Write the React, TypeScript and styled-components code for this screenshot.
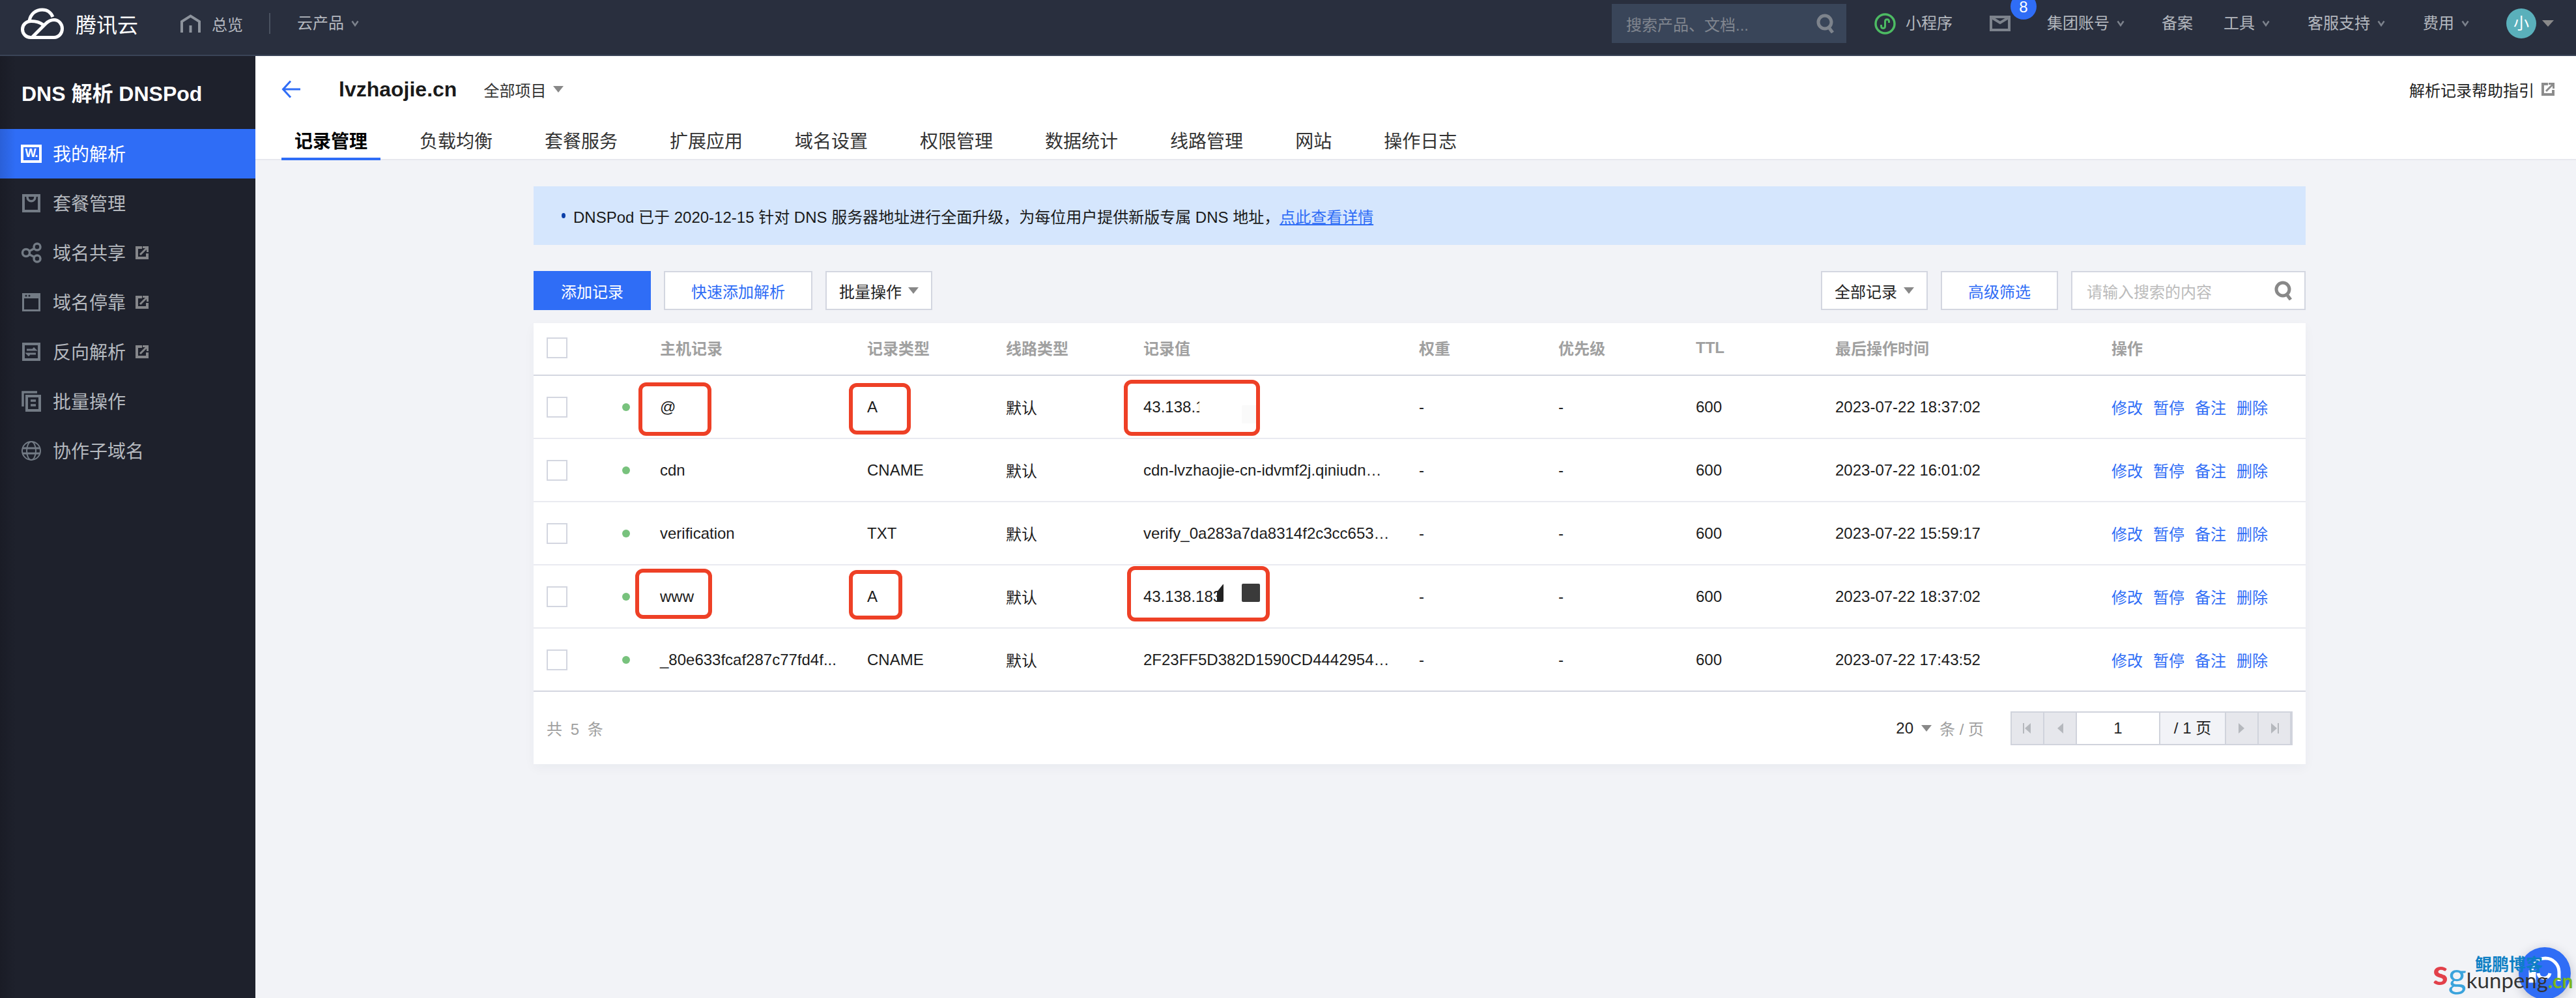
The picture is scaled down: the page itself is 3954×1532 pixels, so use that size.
import * as React from 'react'
import styled, { createGlobalStyle } from 'styled-components'

const FONT = `"Liberation Sans", "Noto Sans CJK SC", sans-serif`
const BLUE = '#2f6df6'
const LINE = '#d3d6e0'
const ROW_COLS = '194px 318px 213px 211px 423px 214px 211px 214px 424px 298px'

const GlobalStyle = createGlobalStyle`
  html, body {
    margin: 0;
    padding: 0;
    background: #f2f3f7;
    font-family: ${FONT};
  }
  * {
    box-sizing: border-box;
  }
`

const Page = styled.div`
  position: relative;
  width: 3954px;
  height: 1532px;
  overflow: hidden;
  display: flex;
  flex-direction: column;
`

/* top bar */
const TopBar = styled.header`
  flex: none;
  height: 86px;
  padding: 0 34px 12px 32px;
  display: flex;
  align-items: center;
  background: #292f3e;
  border-bottom: 2px solid #3a4457;
`

const Brand = styled.div`
  display: flex;
  align-items: center;
  gap: 18px;
  font-size: 32px;
  color: #fff;
`

const NavHome = styled.div`
  display: flex;
  align-items: center;
  gap: 17px;
  margin-left: 65px;
  font-size: 24px;
  color: #b4b8bf;
`

const NavDivider = styled.div`
  width: 2px;
  height: 32px;
  margin: 0 41px 0 40px;
  background: #4a5260;
`

const NavItem = styled.div<{ $gap?: number; $inner?: number }>`
  display: flex;
  align-items: center;
  gap: ${(p) => p.$inner ?? 11}px;
  margin-left: ${(p) => p.$gap ?? 57}px;
  font-size: 24px;
  line-height: 32px;
  color: #b4b8bf;
  white-space: nowrap;
`

const NavSpacer = styled.div`
  flex: 1;
`

const SearchBox = styled.div`
  width: 360px;
  height: 60px;
  padding: 0 18px 0 22px;
  display: flex;
  align-items: center;
  justify-content: space-between;
  background: #394559;
  font-size: 24px;
  color: #80858f;
`

const MailWrap = styled.div`
  position: relative;
  width: 32px;
  height: 24px;
  margin-left: 57px;
`

const Badge = styled.div`
  position: absolute;
  left: 32px;
  top: -34px;
  width: 40px;
  height: 40px;
  padding-top: 2px;
  display: flex;
  align-items: center;
  justify-content: center;
  border-radius: 50%;
  background: ${BLUE};
  color: #fff;
  font-size: 24px;
  line-height: 20px;
`

const Avatar = styled.div`
  width: 46px;
  height: 46px;
  margin-left: 57px;
  border-radius: 50%;
  background: #5ab0bb;
  color: #fff;
  font-size: 24px;
  line-height: 46px;
  text-align: center;
`

const AvatarCaret = styled.span`
  margin-left: 9px;
  width: 0;
  height: 0;
  border-left: 9px solid transparent;
  border-right: 9px solid transparent;
  border-top: 10px solid #8a8a8a;
`

/* sidebar */
const Layout = styled.div`
  flex: 1;
  display: flex;
  min-height: 0;
`

const Sidebar = styled.aside`
  flex: none;
  width: 392px;
  background: linear-gradient(90deg, #1a1c26 0, #1e212c 24px);
`

const SideTitle = styled.div`
  height: 112px;
  padding: 0 0 3px 33px;
  display: flex;
  align-items: center;
  font-size: 32px;
  font-weight: 700;
  color: #fff;
`

const SideItem = styled.div<{ $active?: boolean }>`
  height: 76px;
  padding-left: 32px;
  display: flex;
  align-items: center;
  font-size: 28px;
  color: ${(p) => (p.$active ? '#fff' : '#b5b9bf')};
  background: ${(p) => (p.$active ? `linear-gradient(90deg, #2a60d8 0, ${BLUE} 24px)` : 'none')};
`

const SideLabel = styled.span`
  margin-bottom: 3px;
`

const SideIcon = styled.span`
  flex: none;
  width: 32px;
  height: 32px;
  margin-right: 17px;
  display: flex;
  align-items: center;
  justify-content: center;
`

const WordIcon = styled.span`
  width: 32px;
  height: 28px;
  border: 4px solid #fff;
  color: #fff;
  font-size: 18px;
  font-weight: 700;
  line-height: 19px;
  text-align: center;
  letter-spacing: -1px;
`

const ExternalMark = styled.span`
  display: flex;
  margin-left: 15px;
`

/* page head */
const Main = styled.main`
  flex: 1;
  min-width: 0;
`

const Head = styled.div`
  height: 160px;
  padding: 0 33px 0 40px;
  background: #fff;
  border-bottom: 2px solid #e7e8ee;
`

const HeadRow = styled.div`
  height: 102px;
  display: flex;
  align-items: center;
`

const DomainName = styled.div`
  margin-left: 59px;
  font-size: 32px;
  font-weight: 700;
  color: #1a1a1a;
`

const ProjectPicker = styled.div`
  margin-left: 41px;
  display: flex;
  align-items: center;
  gap: 11px;
  font-size: 24px;
  color: #333;
`

const Caret = styled.span`
  width: 0;
  height: 0;
  border-left: 8px solid transparent;
  border-right: 8px solid transparent;
  border-top: 10px solid #888;
`

const HelpLink = styled.div`
  margin-left: auto;
  display: flex;
  align-items: center;
  gap: 11px;
  font-size: 24px;
  color: #222;
`

const Tabs = styled.div`
  display: flex;
  gap: 40px;
`

const Tab = styled.div<{ $active?: boolean }>`
  height: 58px;
  padding: 0 20px;
  display: flex;
  align-items: center;
  font-size: 28px;
  font-weight: ${(p) => (p.$active ? 700 : 400)};
  color: ${(p) => (p.$active ? '#000' : '#333')};
  border-bottom: 4px solid ${(p) => (p.$active ? BLUE : 'transparent')};
`

/* content */
const Content = styled.div`
  width: 2720px;
  margin: 40px 0 0 427px;
`

const Notice = styled.div`
  height: 90px;
  padding-left: 43px;
  display: flex;
  align-items: center;
  gap: 12px;
  background: #d5e6fd;
  font-size: 24px;
  color: #1a1a1a;
`

const NoticeDot = styled.span`
  width: 6px;
  height: 8px;
  border-radius: 50%;
  background: #0b3ea8;
`

const NoticeLink = styled.a`
  color: ${BLUE};
  text-decoration: underline;
`

const Toolbar = styled.div`
  margin: 40px 0 20px;
  display: flex;
  justify-content: space-between;
`

const ToolGroup = styled.div`
  display: flex;
  gap: 20px;
`

const Button = styled.div<{ $width: number; $primary?: boolean; $link?: boolean }>`
  width: ${(p) => p.$width}px;
  height: 60px;
  display: flex;
  align-items: center;
  justify-content: center;
  gap: 10px;
  font-size: 24px;
  color: ${(p) => (p.$primary ? '#fff' : p.$link ? BLUE : '#222')};
  background: ${(p) => (p.$primary ? BLUE : '#fff')};
  border: 2px solid ${(p) => (p.$primary ? BLUE : LINE)};
`

const SearchField = styled.div`
  width: 360px;
  height: 60px;
  padding: 0 18px 0 22px;
  display: flex;
  align-items: center;
  justify-content: space-between;
  background: #fff;
  border: 2px solid ${LINE};
  font-size: 24px;
  color: #bbb;
`

/* table */
const Card = styled.section`
  position: relative;
  background: #fff;
  box-shadow: 0 6px 16px rgba(30, 40, 70, 0.04);
`

const TableHead = styled.div`
  height: 81px;
  padding-bottom: 4px;
  display: grid;
  grid-template-columns: ${ROW_COLS};
  align-items: center;
  font-size: 24px;
  font-weight: 600;
  color: #a0a0a0;
  border-bottom: 2px solid ${LINE};
`

const TableRow = styled.div<{ $last?: boolean }>`
  height: 97px;
  display: grid;
  grid-template-columns: ${ROW_COLS};
  align-items: center;
  font-size: 24px;
  color: #1c1c1c;
  border-bottom: 2px solid ${(p) => (p.$last ? LINE : '#e9eaf0')};
`

const CheckCell = styled.div`
  padding-left: 20px;
  display: flex;
  align-items: center;
`

const CheckBox = styled.span`
  width: 32px;
  height: 32px;
  background: #fff;
  border: 2px solid ${LINE};
`

const StatusDot = styled.span`
  width: 12px;
  height: 12px;
  margin-left: 84px;
  border-radius: 50%;
  background: #78c27d;
`

const Value = styled.div`
  white-space: nowrap;
`

const Ops = styled.div`
  display: flex;
  gap: 16px;
  color: ${BLUE};
`

const Mark = styled.div<{ $x: number; $y: number; $w: number; $h: number }>`
  position: absolute;
  left: ${(p) => p.$x}px;
  top: ${(p) => p.$y}px;
  width: ${(p) => p.$w}px;
  height: ${(p) => p.$h}px;
  border: 6px solid #ee4026;
  border-radius: 12px;
`

const Scrub = styled.div<{ $x: number; $y: number; $w: number; $h: number; $color: string; $wedge?: boolean }>`
  position: absolute;
  left: ${(p) => p.$x}px;
  top: ${(p) => p.$y}px;
  width: ${(p) => p.$w}px;
  height: ${(p) => p.$h}px;
  background: ${(p) => p.$color};
  border-radius: 2px;
  clip-path: ${(p) => (p.$wedge ? 'polygon(100% 0, 100% 100%, 0 100%, 0 45%)' : 'none')};
`

const TableFoot = styled.div`
  height: 111px;
  padding: 0 20px;
  display: flex;
  align-items: center;
  justify-content: space-between;
  font-size: 24px;
  color: #a0a0a0;
`

const Total = styled.div`
  word-spacing: 6px;
`

const FootRight = styled.div`
  display: flex;
  align-items: center;
`

const PageSize = styled.div`
  display: flex;
  align-items: center;
  gap: 12px;
  margin-right: 41px;
  color: #a0a0a0;
  white-space: nowrap;
`

const PageSizeValue = styled.span`
  color: #222;
`

const Pager = styled.div`
  height: 52px;
  display: flex;
  border: 2px solid #d0d3dc;
`

const PagerButton = styled.div`
  width: 50px;
  display: flex;
  align-items: center;
  justify-content: center;
  background: #e6e7ec;
  border-right: 2px solid #d0d3dc;
`

const PagerInput = styled.div`
  width: 128px;
  background: #fff;
  border-right: 2px solid #d0d3dc;
  color: #222;
  line-height: 48px;
  text-align: center;
`

const PagerTotal = styled.div`
  width: 101px;
  background: #f2f3f7;
  border-right: 2px solid #d0d3dc;
  color: #222;
  line-height: 48px;
  text-align: center;
`

/* floating bits */
const ChatFab = styled.div`
  position: absolute;
  right: 8px;
  bottom: -2px;
  width: 80px;
  height: 80px;
  border-radius: 50%;
  background: ${BLUE};
  box-shadow: 0 4px 16px rgba(30, 40, 70, 0.25);
`

const Watermark = styled.div`
  position: absolute;
  left: 3734px;
  top: 1466px;
  width: 220px;
`

const WatermarkTitle = styled.div`
  margin-left: 65px;
  font-size: 26px;
  font-weight: 700;
  line-height: 30px;
  color: #0d7fc4;
  white-space: nowrap;
`

const WatermarkLine = styled.div`
  margin-top: -24px;
  display: flex;
  align-items: baseline;
  font-family: Lato, sans-serif;
  white-space: nowrap;
`

const WatermarkPart = styled.span<{ $size: number; $color: string; $bold?: boolean; $lift?: number }>`
  font-size: ${(p) => p.$size}px;
  font-weight: ${(p) => (p.$bold ? 700 : 400)};
  color: ${(p) => p.$color};
  line-height: 50px;
  transform: translateY(${(p) => -(p.$lift ?? 0)}px);
`

/* icons */
const Logo = () => (
  <svg width="66" height="48" viewBox="0 0 66 48" fill="none" stroke="#fff" strokeWidth="5">
    <path d="M13 20C15 9 23 3 33 3c7 0 13 4 16 11" />
    <path d="M34 26c-5-4-11-5.500-18-5.500C8 20.500 2.500 26 2.500 33S8 45.500 15 45.500h36c7 0 12.500-6 12.500-13.500S58 18.500 51 18.500c-6 0-9 2-13 6L17 45.500" />
  </svg>
)

const HomeIcon = () => (
  <svg width="31" height="28" viewBox="0 0 31 28" fill="none" stroke="#8d939c" strokeWidth="4">
    <path d="M2 28V11L15.500 2.500 29 11v17" />
    <path d="M15.500 17v11" />
  </svg>
)

const Chevron = () => (
  <svg width="12" height="10" viewBox="0 0 12 10" fill="none" stroke="#7c828c" strokeWidth="2.500">
    <path d="M1.500 1.500 6 8l4.500-6.500" />
  </svg>
)

const SearchIcon = ({ color }: { color: string }) => (
  <svg width="28" height="30" viewBox="0 0 28 30" fill="none" stroke={color} strokeWidth="5">
    <circle cx="13" cy="13" r="10" />
    <path d="M19 21l6 8" />
  </svg>
)

const MiniIcon = () => (
  <svg width="33" height="33" viewBox="0 0 33 33" fill="none" stroke="#4dbb63" strokeWidth="3.500">
    <circle cx="16.500" cy="16.500" r="14.500" />
    <path d="M10.500 18v2c0 4.500 6 4.500 6 0v-7c0-4.500 6-4.500 6 0v2" strokeWidth="3" />
  </svg>
)

const MailIcon = () => (
  <svg width="32" height="24" viewBox="0 0 32 24" fill="none" stroke="#7d838c">
    <rect x="2" y="2" width="28" height="20" strokeWidth="4" />
    <path d="M3 3l13 8 13-8" strokeWidth="4" />
  </svg>
)

const ExternalIcon = ({ color = '#85868a' }: { color?: string }) => (
  <svg width="20" height="20" viewBox="0 0 20 20" fill="none" stroke={color} strokeWidth="4">
    <path d="M10 2H2v16h16v-7" />
    <path d="M7 13 17 3" strokeWidth="3" />
    <path d="M11 1.500h7.500V9" strokeWidth="3" />
  </svg>
)

const ICON = '#737b85'

const PackageIcon = () => (
  <svg width="28" height="28" viewBox="0 0 28 28" fill="none" stroke={ICON}>
    <rect x="2" y="2" width="24" height="24" strokeWidth="4" />
    <path d="M8 4c0 9 12 9 12 0" strokeWidth="3.500" />
  </svg>
)

const ShareIcon = () => (
  <svg width="32" height="32" viewBox="0 0 32 32" fill="none" stroke={ICON} strokeWidth="3.500">
    <circle cx="8" cy="16" r="5.500" />
    <circle cx="25" cy="7" r="5" />
    <circle cx="25" cy="25" r="5" />
    <path d="M13 13.500l7.500-4M13 18.500l7.500 4" />
  </svg>
)

const ParkIcon = () => (
  <svg width="28" height="28" viewBox="0 0 28 28" fill={ICON}>
    <path fillRule="evenodd" d="M0 0h28v28H0zM3 8v17h22V8z" />
    <circle cx="6" cy="4" r="1.500" fill="#1e212c" />
    <circle cx="11" cy="4" r="1.500" fill="#1e212c" />
  </svg>
)

const ReverseIcon = () => (
  <svg width="28" height="28" viewBox="0 0 28 28" fill="none" stroke={ICON}>
    <rect x="2" y="2" width="24" height="24" strokeWidth="4" />
    <path d="M7 11h13l-3-3M21 17H8l3 3" strokeWidth="3" />
  </svg>
)

const BatchIcon = () => (
  <svg width="30" height="32" viewBox="0 0 30 32" fill="none" stroke={ICON}>
    <path d="M2 24V2h22" strokeWidth="3.500" />
    <rect x="8" y="8" width="20" height="22" strokeWidth="4" />
    <path d="M14 15h8M14 22h8" strokeWidth="3.500" />
  </svg>
)

const GlobeIcon = () => (
  <svg width="30" height="30" viewBox="0 0 30 30" fill="none" stroke={ICON} strokeWidth="2">
    <circle cx="15" cy="15" r="14" />
    <ellipse cx="15" cy="15" rx="7" ry="14" />
    <path d="M2 11h26M2 19h26" strokeWidth="3" />
  </svg>
)

const BackArrow = () => (
  <svg width="29" height="28" viewBox="0 0 29 28" fill="none" stroke={BLUE} strokeWidth="3">
    <path d="M14 1.500 2.500 14 14 26.500M3 14h26" />
  </svg>
)

const PagerIcon = ({ dir, edge }: { dir: 'left' | 'right'; edge?: boolean }) => (
  <svg width="14" height="16" viewBox="0 0 14 16" fill="#b5b8bd">
    {dir === 'left' ? <path d="M12 0v16L3 8z" /> : <path d="M2 0v16l9-8z" />}
    {edge && <rect x={dir === 'left' ? 0 : 12} y="0" width="2" height="16" />}
  </svg>
)

const HeadsetIcon = () => (
  <svg width="80" height="80" viewBox="0 0 80 80" fill="none" stroke="#fff" strokeWidth="5">
    <path d="M20 44V38a21 21 0 0 1 42 0v14" />
    <path d="M30 40c1 10 16 10 18 0" />
    <rect x="18" y="38" width="6" height="14" fill="#fff" />
  </svg>
)

const SIDE_ITEMS = [
  { label: '套餐管理', icon: <PackageIcon /> },
  { label: '域名共享', icon: <ShareIcon />, external: true },
  { label: '域名停靠', icon: <ParkIcon />, external: true },
  { label: '反向解析', icon: <ReverseIcon />, external: true },
  { label: '批量操作', icon: <BatchIcon /> },
  { label: '协作子域名', icon: <GlobeIcon /> },
]

const TABS = ['记录管理', '负载均衡', '套餐服务', '扩展应用', '域名设置', '权限管理', '数据统计', '线路管理', '网站', '操作日志']

const COLUMNS = ['主机记录', '记录类型', '线路类型', '记录值', '权重', '优先级', 'TTL', '最后操作时间', '操作']

const RECORDS = [
  { host: '@', type: 'A', value: '43.138.1', time: '2023-07-22 18:37:02' },
  { host: 'cdn', type: 'CNAME', value: 'cdn-lvzhaojie-cn-idvmf2j.qiniudn…', time: '2023-07-22 16:01:02' },
  { host: 'verification', type: 'TXT', value: 'verify_0a283a7da8314f2c3cc653…', time: '2023-07-22 15:59:17' },
  { host: 'www', type: 'A', value: '43.138.183', time: '2023-07-22 18:37:02' },
  { host: '_80e633fcaf287c77fd4f...', type: 'CNAME', value: '2F23FF5D382D1590CD4442954…', time: '2023-07-22 17:43:52' },
]

const App = () => (
  <Page>
    <GlobalStyle />
    <TopBar>
      <Brand>
        <Logo />
        腾讯云
      </Brand>
      <NavHome>
        <HomeIcon />
        总览
      </NavHome>
      <NavDivider />
      <NavItem $gap={0}>
        云产品
        <Chevron />
      </NavItem>
      <NavSpacer />
      <SearchBox>
        搜索产品、文档...
        <SearchIcon color="#7d838c" />
      </SearchBox>
      <NavItem $gap={43} $inner={15}>
        <MiniIcon />
        小程序
      </NavItem>
      <MailWrap>
        <MailIcon />
        <Badge>8</Badge>
      </MailWrap>
      <NavItem $gap={56}>
        集团账号
        <Chevron />
      </NavItem>
      <NavItem $gap={57}>备案</NavItem>
      <NavItem $gap={47}>
        工具
        <Chevron />
      </NavItem>
      <NavItem $gap={58}>
        客服支持
        <Chevron />
      </NavItem>
      <NavItem $gap={58}>
        费用
        <Chevron />
      </NavItem>
      <Avatar>小</Avatar>
      <AvatarCaret />
    </TopBar>
    <Layout>
      <Sidebar>
        <SideTitle>DNS 解析 DNSPod</SideTitle>
        <SideItem $active>
          <SideIcon>
            <WordIcon>W.</WordIcon>
          </SideIcon>
          <SideLabel>我的解析</SideLabel>
        </SideItem>
        {SIDE_ITEMS.map((item) => (
          <SideItem key={item.label}>
            <SideIcon>{item.icon}</SideIcon>
            <SideLabel>{item.label}</SideLabel>
            {item.external && (
              <ExternalMark>
                <ExternalIcon />
              </ExternalMark>
            )}
          </SideItem>
        ))}
      </Sidebar>
      <Main>
        <Head>
          <HeadRow>
            <BackArrow />
            <DomainName>lvzhaojie.cn</DomainName>
            <ProjectPicker>
              全部项目
              <Caret />
            </ProjectPicker>
            <HelpLink>
              解析记录帮助指引
              <ExternalIcon color="#8c8c8c" />
            </HelpLink>
          </HeadRow>
          <Tabs>
            {TABS.map((tab, i) => (
              <Tab key={tab} $active={i === 0}>
                {tab}
              </Tab>
            ))}
          </Tabs>
        </Head>
        <Content>
          <Notice>
            <NoticeDot />
            <span>
              DNSPod 已于 2020-12-15 针对 DNS 服务器地址进行全面升级，为每位用户提供新版专属 DNS 地址，
              <NoticeLink>点此查看详情</NoticeLink>
            </span>
          </Notice>
          <Toolbar>
            <ToolGroup>
              <Button $width={180} $primary>
                添加记录
              </Button>
              <Button $width={228} $link>
                快速添加解析
              </Button>
              <Button $width={164}>
                批量操作
                <Caret />
              </Button>
            </ToolGroup>
            <ToolGroup>
              <Button $width={164}>
                全部记录
                <Caret />
              </Button>
              <Button $width={180} $link>
                高级筛选
              </Button>
              <SearchField>
                请输入搜索的内容
                <SearchIcon color="#888" />
              </SearchField>
            </ToolGroup>
          </Toolbar>
          <Card>
            <TableHead>
              <CheckCell>
                <CheckBox />
              </CheckCell>
              {COLUMNS.map((col) => (
                <div key={col}>{col}</div>
              ))}
            </TableHead>
            {RECORDS.map((record, i) => (
              <TableRow key={record.host} $last={i === RECORDS.length - 1}>
                <CheckCell>
                  <CheckBox />
                  <StatusDot />
                </CheckCell>
                <Value>{record.host}</Value>
                <Value>{record.type}</Value>
                <Value>默认</Value>
                <Value>{record.value}</Value>
                <Value>-</Value>
                <Value>-</Value>
                <Value>600</Value>
                <Value>{record.time}</Value>
                <Ops>
                  <span>修改</span>
                  <span>暂停</span>
                  <span>备注</span>
                  <span>删除</span>
                </Ops>
              </TableRow>
            ))}
            <TableFoot>
              <Total>共 5 条</Total>
              <FootRight>
                <PageSize>
                  <PageSizeValue>20</PageSizeValue>
                  <Caret />
                  <span>条 / 页</span>
                </PageSize>
                <Pager>
                  <PagerButton>
                    <PagerIcon dir="left" edge />
                  </PagerButton>
                  <PagerButton>
                    <PagerIcon dir="left" />
                  </PagerButton>
                  <PagerInput>1</PagerInput>
                  <PagerTotal>/ 1 页</PagerTotal>
                  <PagerButton>
                    <PagerIcon dir="right" />
                  </PagerButton>
                  <PagerButton>
                    <PagerIcon dir="right" edge />
                  </PagerButton>
                </Pager>
              </FootRight>
            </TableFoot>

            {/* screenshot annotations lying over the table */}
            <Scrub $x={1022} $y={112} $w={24} $h={46} $color="#fff" />
            <Scrub $x={1087} $y={126} $w={24} $h={28} $color="#fafafa" />
            <Scrub $x={1049} $y={400} $w={10} $h={28} $color="#222" $wedge />
            <Scrub $x={1087} $y={400} $w={28} $h={28} $color="#3a3a3a" />
            <Mark $x={161} $y={91} $w={112} $h={82} />
            <Mark $x={484} $y={92} $w={95} $h={79} />
            <Mark $x={906} $y={87} $w={209} $h={86} />
            <Mark $x={156} $y={377} $w={118} $h={77} />
            <Mark $x={484} $y={379} $w={82} $h={76} />
            <Mark $x={911} $y={373} $w={219} $h={85} />
          </Card>
        </Content>
      </Main>
    </Layout>
    <ChatFab>
      <HeadsetIcon />
    </ChatFab>
    <Watermark>
      <WatermarkTitle>鲲鹏博客</WatermarkTitle>
      <WatermarkLine>
        <WatermarkPart $size={54} $color="#e2404a" $bold $lift={5}>
          s
        </WatermarkPart>
        <WatermarkPart $size={54} $color="#3aa3dc">
          g
        </WatermarkPart>
        <WatermarkPart $size={33} $color="#333">
          kunpeng
        </WatermarkPart>
        <WatermarkPart $size={30} $color="#7ab51d" $bold>
          .cn
        </WatermarkPart>
      </WatermarkLine>
    </Watermark>
  </Page>
)

export default App
